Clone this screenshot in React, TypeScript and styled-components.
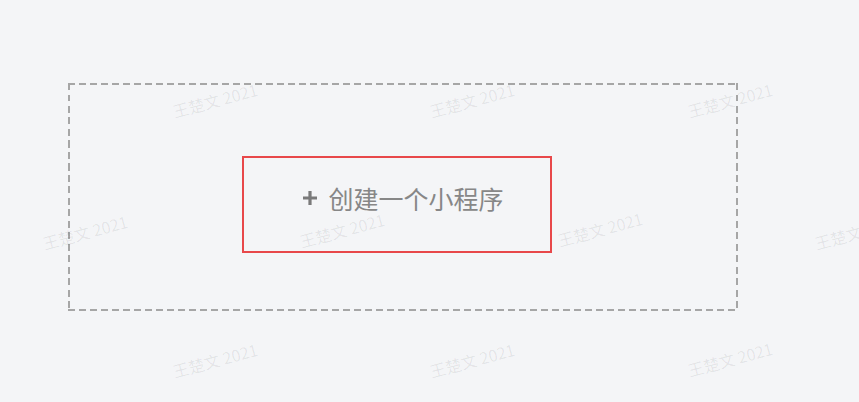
import React from "react";
import styled, { createGlobalStyle } from "styled-components";

const Global = createGlobalStyle`
  html, body { margin: 0; padding: 0; background: #f4f5f7; }
  body { font-family: "PingFang SC", "Noto Sans CJK SC", "Liberation Sans", sans-serif; }
`;

const Page = styled.div`
  position: relative;
  width: 859px;
  height: 402px;
  overflow: hidden;
  background: #f4f5f7;
  padding: 83px 0 0 68px;
  box-sizing: border-box;
`;

const dash = "#a6a6a6";

const DropZone = styled.div`
  position: relative;
  width: 670px;
  height: 228px;
  box-sizing: border-box;
  display: flex;
  align-items: center;
  justify-content: center;
  padding-top: 2px;
  background:
    repeating-linear-gradient(90deg, ${dash} 0 7px, transparent 7px 11px) top left / 100% 2px no-repeat,
    repeating-linear-gradient(90deg, ${dash} 0 7px, transparent 7px 11px) bottom left / 100% 2px no-repeat,
    repeating-linear-gradient(180deg, ${dash} 0 7px, transparent 7px 11.5px) top left / 2px 100% no-repeat,
    repeating-linear-gradient(180deg, ${dash} 0 7px, transparent 7px 11.5px) top right / 2px 100% no-repeat;
`;

const CreateButton = styled.button`
  display: flex;
  align-items: center;
  gap: 10px;
  background: none;
  border: none;
  padding: 0;
  color: #878787;
  font-family: "PingFang SC", "Noto Sans CJK SC", sans-serif;
  font-size: 25px;
  line-height: 1;
  cursor: pointer;
`;

const Plus = styled.svg`
  width: 16px;
  height: 16px;
  display: block;
`;

const Highlight = styled.div`
  position: absolute;
  left: 174px;
  top: 73px;
  width: 310px;
  height: 97px;
  box-sizing: border-box;
  border: 2.5px solid #e8484a;
  pointer-events: none;
`;

const WatermarkLayer = styled.div`
  position: absolute;
  inset: 0;
  pointer-events: none;
`;

const Mark = styled.span<{ $x: number; $y: number }>`
  position: absolute;
  left: ${(p) => p.$x}px;
  top: ${(p) => p.$y}px;
  transform: translate(-50%, -50%) rotate(-15deg);
  white-space: nowrap;
  font-family: "PingFang SC", "Noto Sans CJK SC", "Liberation Sans", sans-serif;
  font-size: 16px;
  color: rgba(0, 0, 0, 0.075);
`;

const marks: Array<[number, number]> = [
  [215, 100], [472, 100], [730, 100],
  [85, 232], [342, 230], [600, 229], [857, 232],
  [215, 360], [472, 360], [730, 359],
];

export default function App() {
  return (
    <>
      <Global />
      <Page>
        <DropZone>
          <CreateButton>
            <Plus viewBox="0 0 16 16">
              <path d="M8 1v14M1 8h14" stroke="#7a7a7a" strokeWidth="3.2" />
            </Plus>
            <span>创建一个小程序</span>
          </CreateButton>
          <Highlight />
        </DropZone>
        <WatermarkLayer>
          {marks.map(([x, y], i) => (
            <Mark key={i} $x={x} $y={y}>
              王楚文 2021
            </Mark>
          ))}
        </WatermarkLayer>
      </Page>
    </>
  );
}
